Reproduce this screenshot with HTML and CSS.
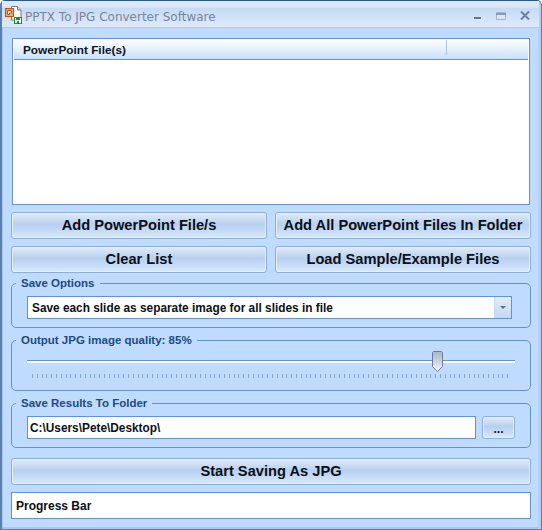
FILE: index.html
```html
<!DOCTYPE html>
<html lang="en">

<head>
    <meta charset="UTF-8">
    <title>PPTX To JPG Converter Software</title>
    <link rel="stylesheet" href="styles.css">
</head>

<body>
    <div class="window">
        <div class="titlebar">
            <svg class="appicon" width="17" height="18" viewBox="0 0 17 18">
                <path d="M6.500 .5h6l3.500 3.500v10h-9.500z" fill="#fff" stroke="#777" />
                <path d="M12.500 .5v3.500h3.500" fill="#ddd" stroke="#777" />
                <rect x=".5" y="2.500" width="8" height="8" fill="#eda868" stroke="#c4500f" />
                <path d="M2.500 4.500h4v2.500h-2v1.500h-2z" fill="#fff" stroke="#c4500f" />
                <rect x="9.500" y="11.500" width="7" height="6" fill="#fff" stroke="#17902a" />
                <rect x="11" y="12" width="4" height="2" fill="#17902a" />
                <rect x="12" y="15" width="2" height="2" fill="#17902a" />
            </svg>
            <span class="title">PPTX To JPG Converter Software</span>
            <div class="winbtns">
                <svg class="minbtn" width="8" height="3" viewBox="0 0 8 3"><path d="M0 0h8v3H0z" fill="#dfe9f8" /><path d="M0 0h7v2H0z" fill="#5f7696" /></svg>
                <svg class="maxbtn" width="10" height="8" viewBox="0 0 10 8"><path d="M.5 .5h9v7h-9z" fill="#dbe6f5" stroke="#a6b4c8" /><path d="M0 1h10v2H0z" fill="#8b9cb4" /></svg>
                <svg class="closebtn" width="10" height="9" viewBox="0 0 10 9"><path d="M1 .5 9 8.500M9 .5 1 8.500" stroke="#6b7f9c" stroke-width="2" fill="none" /></svg>
            </div>
        </div>

        <div class="content">
            <div class="listbox">
                <div class="listhead">
                    <div class="listcol">PowerPoint File(s)</div>
                </div>
            </div>

            <div class="btnrows">
                <button class="btn">Add PowerPoint File/s</button>
                <button class="btn">Add All PowerPoint Files In Folder</button>
                <button class="btn">Clear List</button>
                <button class="btn">Load Sample/Example Files</button>
            </div>

            <fieldset class="group saveopts">
                <legend>Save Options</legend>
                <div class="combo">
                    <span class="combotext">Save each slide as separate image for all slides in file</span>
                    <span class="comboarrow"></span>
                </div>
            </fieldset>

            <fieldset class="group quality">
                <legend>Output JPG image quality: 85%</legend>
                <div class="slider">
                    <div class="track"></div>
                    <svg class="thumb" width="11" height="21" viewBox="0 0 11 21">
                        <defs>
                            <linearGradient id="thumbfill" x1="0" y1="0" x2="0" y2="1">
                                <stop offset="0" stop-color="#a9b6c9" />
                                <stop offset="0.5" stop-color="#c9d3e0" />
                                <stop offset="1" stop-color="#fdfdfe" />
                            </linearGradient>
                        </defs>
                        <path d="M1.500 .5h8l1 1v14l-5 5-5-5v-14z" fill="url(#thumbfill)" stroke="#6c7d9c" />
                    </svg>
                </div>
                <div class="ticks"></div>
            </fieldset>

            <fieldset class="group folder">
                <legend>Save Results To Folder</legend>
                <div class="folderrow">
                    <div class="field">C:\Users\Pete\Desktop\</div>
                    <button class="btn browse">...</button>
                </div>
            </fieldset>

            <button class="btn start">Start Saving As JPG</button>
            <div class="progress">Progress Bar</div>
        </div>
    </div>
</body>

</html>
```

FILE: styles.css
```css
html,
body {
    margin: 0;
    padding: 0;
}

body {
    width: 542px;
    height: 530px;
    overflow: hidden;
    font-family: 'Liberation Sans', Arial, sans-serif;
}

.window {
    box-sizing: border-box;
    width: 542px;
    height: 530px;
    background-color: #bfdbff;
    border: 1px solid #5a7fae;
    border-left-width: 2px;
    border-top-color: #2f5688;
    border-radius: 5px 5px 0 0;
    box-shadow: inset 1px 0 0 #a9c8ee, inset -3px 0 0 #b3cff3, inset 0 -2px 0 #a9c6ec;
}

.titlebar {
    display: flex;
    align-items: flex-start;
    height: 27px;
    box-sizing: border-box;
    margin-right: 2px;
    padding: 5px 9px 0 3px;
    background: linear-gradient(#dbe8f9 0, #dbe8f9 6px, #c6daf5 7px, #dfeafa 100%);
    border-bottom: 1px solid #a8cdf5;
}

.appicon {
    flex: none;
}

.title {
    margin-left: 3px;
    margin-top: 3px;
    font-size: 12px;
    line-height: 16px;
    font-family: 'DejaVu Sans', sans-serif;
    color: #76859a;
}

.winbtns {
    position: relative;
    margin-left: auto;
    height: 18px;
    width: 57px;
}

.winbtns svg {
    position: absolute;
}

.minbtn {
    left: 1px;
    top: 11px;
}

.maxbtn {
    left: 23px;
    top: 6px;
}

.closebtn {
    left: 47px;
    top: 5px;
}

.content {
    padding: 10px 9px 0 9px;
}

.listbox {
    box-sizing: border-box;
    width: 518px;
    height: 167px;
    margin-left: 1px;
    padding: 1px;
    background-color: white;
    border: 1px solid #6591cd;
}

.listhead {
    height: 19px;
    padding-right: 2px;
    background: linear-gradient(#ffffff, #c8e0fd);
    border-bottom: 1px solid #6591cd;
}

.listcol {
    box-sizing: border-box;
    width: 433px;
    height: 15px;
    padding-left: 9px;
    line-height: 21px;
    font-size: 11.8px;
    font-weight: bold;
    color: #0b1524;
    border-right: 1px solid #a4c6f0;
}

.btn {
    display: block;
    padding: 0 0 2px 0;
    box-sizing: border-box;
    border: 1px solid #8eaed8;
    border-radius: 3px;
    background: linear-gradient(#e0ebf9 0, #cfdff5 20%, #b8d0ef 45%, #c4daf5 70%, #d9eafd 100%);
    box-shadow: inset 0 0 0 1px #e6f0fc;
    font-family: 'Liberation Sans', Arial, sans-serif;
    font-weight: bold;
    font-size: 14.67px;
    color: #0b0f17;
}

.btnrows {
    display: grid;
    grid-template-columns: 256px 256px;
    grid-auto-rows: 27px;
    column-gap: 8px;
    row-gap: 7px;
    margin-top: 7px;
}

.group {
    box-sizing: border-box;
    width: 520px;
    margin: 0;
    padding: 0 15px;
    border: 1px solid #6591cd;
    border-radius: 5px;
    min-width: 0;
}

.group legend {
    padding: 0 5px;
    margin-left: -11px;
    font-size: 11.5px;
    font-weight: bold;
    line-height: 14px;
    color: #1e4a80;
}

.saveopts {
    height: 52px;
    margin-top: 3px;
}

.combo {
    display: flex;
    box-sizing: border-box;
    width: 485px;
    height: 23px;
    margin-top: 6px;
    background-color: white;
    border: 1px solid #6591cd;
}

.combotext {
    flex: 1;
    padding-left: 4px;
    line-height: 23px;
    font-size: 11.85px;
    font-weight: bold;
    color: #0b0f17;
}

.comboarrow {
    position: relative;
    width: 16px;
    background: linear-gradient(#e2ecf9, #c3d8f4);
    border-left: 1px solid #c3d8f4;
}

.comboarrow::after {
    content: "";
    position: absolute;
    left: 5px;
    top: 9px;
    border: 3px solid transparent;
    border-top: 3px solid #5a6f8c;
}

.quality {
    height: 58px;
    margin-top: 5px;
}

.slider {
    position: relative;
    height: 19px;
    margin-top: 8px;
}

.track {
    position: absolute;
    left: 0;
    right: 0;
    top: 5px;
    height: 3px;
    background-color: white;
    border-top: 1px solid #6591cd;
    box-sizing: border-box;
}

.thumb {
    position: absolute;
    left: 405px;
    top: -4px;
}

.ticks {
    width: 478px;
    height: 4px;
    margin-left: 5px;
    background-image: repeating-linear-gradient(to right, #7fa3d6 0, #7fa3d6 1px, transparent 1px, transparent 4.8px);
}

.folder {
    height: 52px;
    margin-top: 5px;
}

.folderrow {
    display: flex;
    gap: 6px;
    margin-top: 6px;
}

.field {
    box-sizing: border-box;
    width: 450px;
    height: 23px;
    padding-left: 2px;
    line-height: 23px;
    font-size: 11.85px;
    font-weight: bold;
    color: #0b0f17;
    background-color: white;
    border: 1px solid #6591cd;
}

.browse {
    width: 33px;
    height: 23px;
    padding: 3px 0 0 0;
    font-size: 12px;
    line-height: 12px;
    color: #301010;
}

.start {
    width: 520px;
    height: 27px;
    margin-top: 10px;
}

.progress {
    box-sizing: border-box;
    width: 520px;
    height: 27px;
    margin-top: 7px;
    padding-left: 4px;
    line-height: 27px;
    font-size: 12px;
    font-weight: bold;
    color: #0b0f17;
    background-color: white;
    border: 1px solid #6591cd;
}
```
